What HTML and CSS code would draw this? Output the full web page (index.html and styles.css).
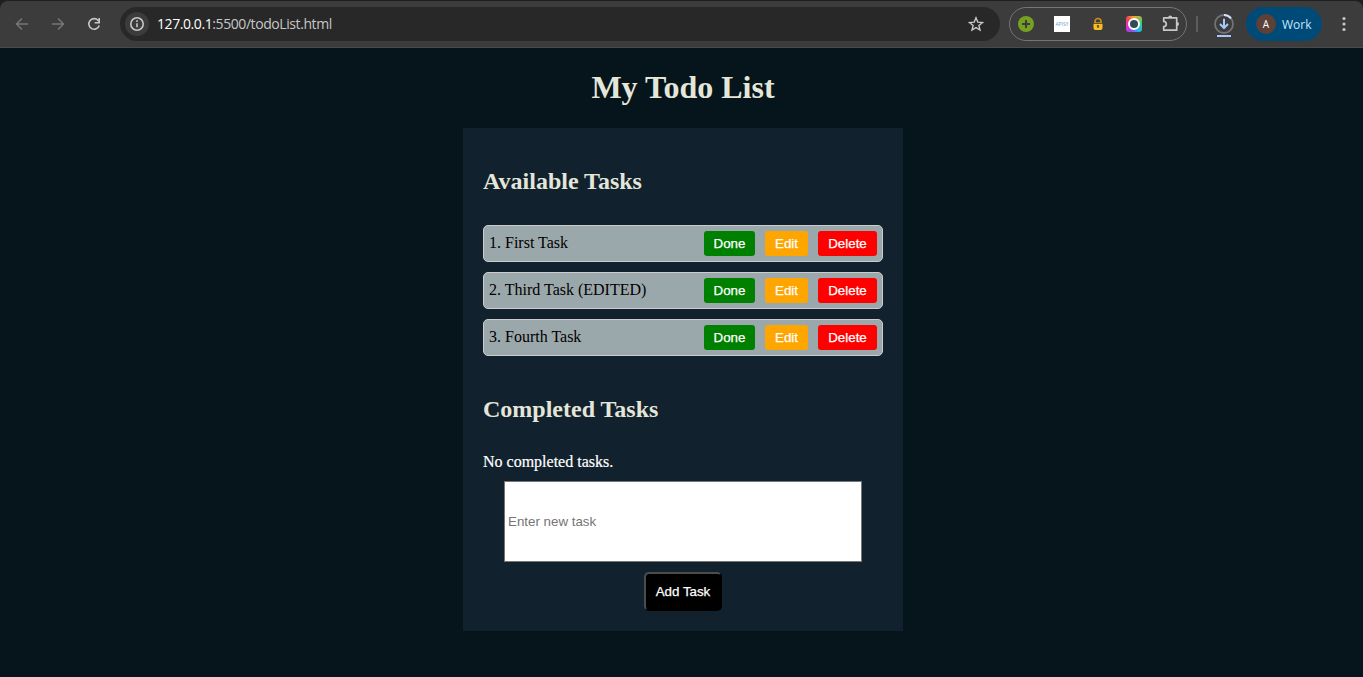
FILE: index.html
```html
<!DOCTYPE html>
<html lang="en">
<head>
<meta charset="utf-8">
<title>My Todo List</title>
<link rel="stylesheet" href="styles.css">
</head>
<body>
<header class="frame">
  <div class="toolbar">
    <nav class="nav">
      <svg class="icon dim" width="16" height="16" viewBox="0 0 16 16"><path d="M14 8H3M8 2.500 2.500 8 8 13.500"/></svg>
      <svg class="icon dim" width="16" height="16" viewBox="0 0 16 16"><path d="M2 8h11M8 2.500 13.500 8 8 13.500"/></svg>
      <svg class="icon" width="16" height="16" viewBox="0 0 16 16"><path d="M13.200 9.500a5.300 5.300 0 1 1-1.200-5.200L13.500 6M13.200 2v4.700H8.700"/></svg>
    </nav>
    <div class="address">
      <span class="info"><svg class="icon" width="16" height="16" viewBox="0 0 16 16"><circle cx="8" cy="8" r="6.200"/><path d="M8 7.200v4M8 4.300v1.600"/></svg></span>
      <span class="url"><span class="host">127.0.0.1</span>:5500/todoList.html</span>
      <svg class="icon star" width="16" height="16" viewBox="0 0 16 16"><path d="m8 1.800 1.800 4.300 4.700.4-3.600 3 1.100 4.600-4-2.500-4 2.500 1.100-4.600-3.600-3 4.700-.4z"/></svg>
    </div>
    <div class="extensions">
      <svg width="16" height="16" viewBox="0 0 16 16"><circle cx="8" cy="8" r="8" fill="#76a021"/><path d="M8 4v8M4 8h8" stroke="#3c3c3c" stroke-width="2"/></svg>
      <span class="apisy">APISY</span>
      <svg width="16" height="16" viewBox="0 0 16 16"><path d="M5 8V5.500a3 3 0 0 1 6 0V8" fill="none" stroke="#c58f18" stroke-width="1.700"/><rect x="3.500" y="6.500" width="9" height="7.500" rx="2" fill="#f8bd20"/><path d="M4 7.500h8" stroke="#6e5320"/><path d="M8 9v3M6.800 10h2.400" stroke="#4b3c24" stroke-width="1.200"/></svg>
      <span class="lens"><span class="lens-ring"></span></span>
      <svg width="18" height="18" viewBox="0 0 18 18"><path d="M1.700 2.800H14.700V15.200H1.700V11.600a2.500 2.500 0 0 0 0-5.200z" fill="none" stroke="#c7c7c7" stroke-width="1.700" stroke-linejoin="round"/><path d="M6.200 2.600a2 2 0 0 1 4 0zM15 7a2 2 0 0 1 0 4z" fill="#c7c7c7"/></svg>
    </div>
    <span class="divider"></span>
    <svg class="download" width="22" height="26" viewBox="0 0 22 26"><circle cx="11" cy="11" r="9" stroke="#737373" stroke-width="1.800"/><path d="M11 2a9 9 0 0 1 7 3.300" stroke="#d3e3fd" stroke-width="2"/><path d="M11 5.700v9M7 11l4 4 4-4" stroke="#a8c7fa" stroke-width="2"/><path d="M4 23h14" stroke="#a8c7fa" stroke-width="2"/></svg>
    <div class="profile"><span class="avatar">A</span>Work</div>
    <svg class="more" width="4" height="16" viewBox="0 0 4 16"><circle cx="2" cy="2.500" r="1.600"/><circle cx="2" cy="8" r="1.600"/><circle cx="2" cy="13.500" r="1.600"/></svg>
  </div>
</header>
<main class="page">
  <h1 class="title">My Todo List</h1>
  <section class="panel">
    <h2 class="heading">Available Tasks</h2>
    <div class="tasks">
      <div class="task"><span class="name">1. First Task</span><button class="btn done">Done</button><button class="btn edit">Edit</button><button class="btn delete">Delete</button></div>
      <div class="task"><span class="name">2. Third Task (EDITED)</span><button class="btn done">Done</button><button class="btn edit">Edit</button><button class="btn delete">Delete</button></div>
      <div class="task"><span class="name">3. Fourth Task</span><button class="btn done">Done</button><button class="btn edit">Edit</button><button class="btn delete">Delete</button></div>
    </div>
    <h2 class="heading completed">Completed Tasks</h2>
    <p class="empty">No completed tasks.</p>
    <input class="entry" type="text" placeholder="Enter new task">
    <button class="add">Add Task</button>
  </section>
</main>
</body>
</html>
```
FILE: styles.css
```css
* { box-sizing: border-box; }
body {
  margin: 0;
  height: 677px;
  overflow: hidden;
  background: #05151b;
  font-family: "Liberation Serif", "Times New Roman", serif;
}
.frame { height: 48px; padding-top: 1px; background: #1f1f1f; }
.toolbar {
  display: flex;
  align-items: center;
  height: 47px;
  padding-left: 14px;
  background: #3c3c3c;
  border-bottom: 1px solid #4a4a4a;
  border-radius: 8px 8px 0 0;
  font-family: "Open Sans", sans-serif;
}
svg { display: block; flex: none; }
.icon { fill: none; stroke: #c7c7c7; stroke-width: 1.6; }
.dim { stroke: #757575; }
.nav { display: flex; gap: 20px; width: 106px; }
.address {
  display: flex;
  align-items: center;
  width: 880px;
  height: 34px;
  padding: 0 16px 0 5px;
  border-radius: 17px;
  background: #282828;
}
.info {
  display: grid;
  place-items: center;
  width: 24px;
  height: 24px;
  border-radius: 50%;
  background: #3c3c3c;
}
.url { margin-left: 8px; color: #c7c7c7; font: 14px/20px "Open Sans", sans-serif; letter-spacing: -0.42px; white-space: nowrap; }
.host { color: #fff; }
.star { margin-left: auto; stroke-width: 1.4; }
.extensions {
  display: flex;
  align-items: center;
  gap: 20px;
  width: 178px;
  height: 34px;
  margin-left: 9px;
  padding-left: 8px;
  border: 1px solid #757575;
  border-radius: 17px;
}
.apisy {
  display: grid;
  place-items: center;
  width: 16px;
  height: 16px;
  background: #fff;
  color: #6d9dc2;
  font-size: 5px;
  line-height: 1;
}
.lens {
  display: grid;
  place-items: center;
  width: 16px;
  height: 16px;
  border-radius: 3px;
  background: conic-gradient(#f5a623, #35d07f 25%, #20b8f0 40%, #914af0 55%, #e82bd0 70%, #f04060 85%, #f5a623);
}
.lens-ring { width: 12px; height: 12px; border: 2px solid #fff; border-radius: 50%; background: #34495a; }
.divider { width: 2px; height: 16px; margin-left: 9px; background: #5c5c5c; }
.download { margin: 4px 0 0 15px; fill: none; }
.profile {
  display: flex;
  align-items: center;
  gap: 6px;
  width: 76px;
  height: 34px;
  margin-left: 11px;
  padding-left: 10px;
  border-radius: 17px;
  background: #004a77;
  color: #c2e7ff;
  font-size: 12px;
}
.avatar {
  display: grid;
  place-items: center;
  width: 20px;
  height: 20px;
  border-radius: 50%;
  background: #5d4037;
  color: #fff;
  font-size: 10px;
}
.more { margin-left: 20px; fill: #c7c7c7; }
.page { display: flex; flex-direction: column; align-items: center; padding-left: 3px; }
.title { margin: 21px 0 22px; color: #e4e6d9; font-size: 32px; line-height: 37px; }
.panel {
  display: flex;
  flex-direction: column;
  align-items: center;
  width: 440px;
  height: 503px;
  padding: 40px 20px 20px;
  background: #11212d;
}
.heading { align-self: flex-start; margin: 0; color: #e4e6d9; font-size: 24px; line-height: 27px; }
.tasks { display: flex; flex-direction: column; gap: 10px; width: 100%; margin-top: 30px; }
.task {
  display: flex;
  align-items: center;
  gap: 10px;
  height: 37px;
  padding: 5px;
  border: 1px solid #ccc;
  border-radius: 5px;
  background: #9ba8ab;
}
.name { flex: 1; font-size: 16px; line-height: 18px; padding-bottom: 1px; }
.btn {
  height: 25px;
  padding: 0;
  border: 0;
  border-radius: 3px;
  color: #fff;
  font: 13.333px "Liberation Sans", Arial, sans-serif;
  -webkit-text-stroke: 0.25px #fff;
}
.done { width: 51px; background: #008000; }
.edit { width: 43px; background: #ffa500; }
.delete { width: 59px; background: #f00; }
.completed { margin-top: 40px; }
.empty {
  align-self: flex-start;
  margin: 30px 0 0;
  color: #fff;
  font-size: 16px;
  line-height: 18px;
  -webkit-text-stroke: 0.2px #fff;
}
.entry {
  width: 358px;
  height: 81px;
  margin-top: 10px;
  padding: 1px 3px;
  border: 1px solid #767676;
  background: #fff;
  font: 13.333px "Liberation Sans", Arial, sans-serif;
}
.entry::placeholder { color: #757575; }
.add {
  width: 78px;
  height: 39px;
  margin-top: 10px;
  padding: 0;
  border: 2px solid;
  border-color: #4c4c4c #000 #000 #4c4c4c;
  border-radius: 5px;
  background: #000;
  color: #fff;
  font: 13.333px "Liberation Sans", Arial, sans-serif;
  -webkit-text-stroke: 0.25px #fff;
}
```
